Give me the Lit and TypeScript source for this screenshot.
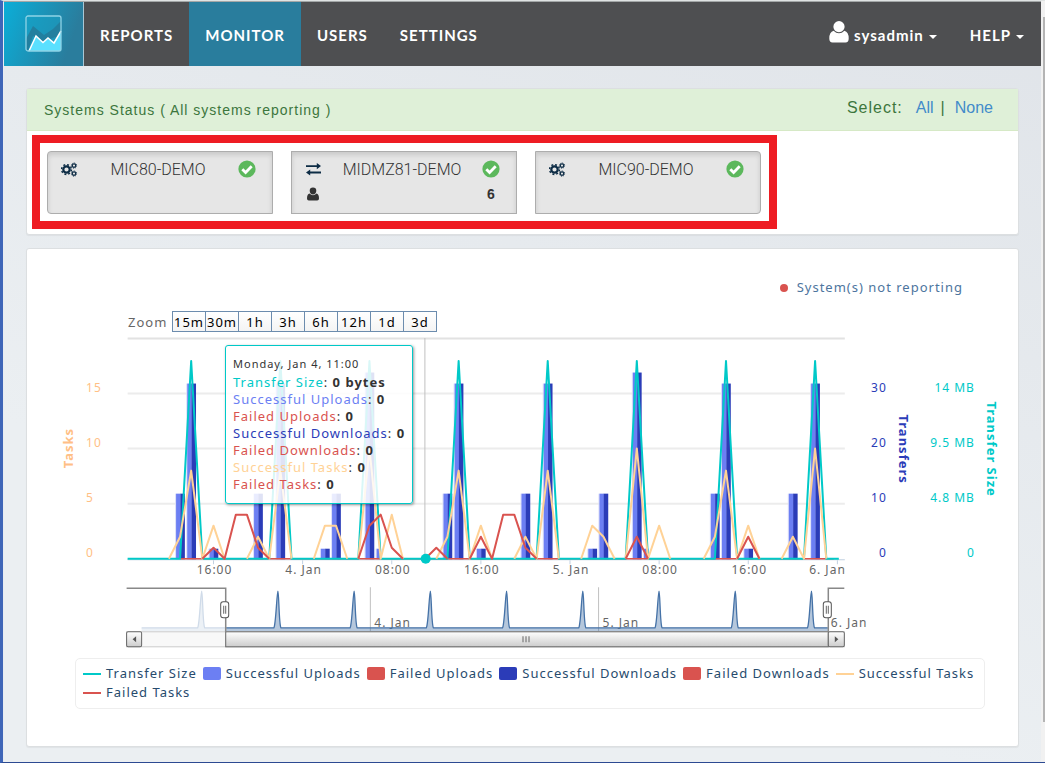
import { LitElement, html, svg, css } from "lit";
import { customElement, property, state } from "lit/decorators.js";

interface System {
  name: string;
  kind: "central" | "dmz";
  sessions?: number;
}

const SYSTEMS: System[] = [
  { name: "MIC80-DEMO", kind: "central" },
  { name: "MIDMZ81-DEMO", kind: "dmz", sessions: 6 },
  { name: "MIC90-DEMO", kind: "central" },
];

const RANGES = ["15m", "30m", "1h", "3h", "6h", "12h", "1d", "3d"];

const LEGEND = [
  { label: "Transfer Size", color: "#00c9c8", shape: "line" },
  { label: "Successful Uploads", color: "#6c7ff3", shape: "box" },
  { label: "Failed Uploads", color: "#d9534f", shape: "box" },
  { label: "Successful Downloads", color: "#2b3cb8", shape: "box" },
  { label: "Failed Downloads", color: "#d9534f", shape: "box" },
  { label: "Successful Tasks", color: "#ffd296", shape: "line" },
  { label: "Failed Tasks", color: "#d9534f", shape: "line" },
];

const READOUT = [
  { label: "Transfer Size", color: "#00c9c8", value: "0 bytes" },
  { label: "Successful Uploads", color: "#6c7ff3", value: "0" },
  { label: "Failed Uploads", color: "#d9534f", value: "0" },
  { label: "Successful Downloads", color: "#2b3cb8", value: "0" },
  { label: "Failed Downloads", color: "#d9534f", value: "0" },
  { label: "Successful Tasks", color: "#ffd296", value: "0" },
  { label: "Failed Tasks", color: "#d9534f", value: "0" },
];

/* Hours are counted from 16:00 on the first day. */
const HOUR = 11.13;
const ORIGIN = 186.3;
const BASE = 224.5;
const hx = (h: number) => ORIGIN + h * HOUR;
const taskY = (n: number) => BASE - n * 11;

const PEAKS = [-2, 6, 14, 22, 30, 38, 46, 54];

/* [hour, uploads, downloads] */
const TRANSFERS: [number, number, number][] = [
  [-3, 12, 12], [-2, 32, 32], [0, 2, 2], [4, 12, 12], [6, 32, 32], [10, 2, 2],
  [11, 12, 12], [14, 34, 34], [15, 2, 0], [21, 12, 12], [22, 32, 32], [24, 2, 2],
  [28, 12, 12], [30, 32, 32], [34, 2, 2], [35, 12, 12], [38, 34, 34], [39, 2, 0],
  [45, 12, 12], [46, 32, 32], [48, 2, 2], [52, 12, 12], [54, 32, 32],
];

const TASKS_OK: [number, number][][] = [
  [[-4, 0], [-3, 2], [-2, 8], [-1, 0], [0, 3], [1, 0]],
  [[3, 0], [4, 2], [5, 0], [6, 8], [7, 0]],
  [[9, 0], [10, 3], [11, 3], [12, 0]],
  [[13, 0], [14, 10], [15, 0], [16, 4], [17, 0]],
  [[20, 0], [21, 2], [22, 8], [23, 0], [24, 3], [25, 0]],
  [[27, 0], [28, 2], [29, 0], [30, 8], [31, 0]],
  [[33, 0], [34, 3], [35, 2], [36, 0]],
  [[37, 0], [38, 10], [39, 0], [40, 3], [41, 0]],
  [[44, 0], [45, 2], [46, 8], [47, 0], [48, 3], [49, 0]],
  [[51, 0], [52, 2], [53, 0], [54, 10], [55, 0]],
];

const TASKS_FAILED: [number, number][][] = [
  [[-1, 0], [0, 1], [1, 0], [2, 4], [3, 4], [4, 1], [5, 0]],
  [[13, 0], [14, 3], [15, 4], [16, 1], [17, 0]],
  [[19, 0], [20, 1], [21, 0]],
  [[23, 0], [24, 2], [25, 0], [26, 4], [27, 4], [28, 1], [29, 0]],
  [[37, 0], [38, 2], [39, 0]],
  [[47, 0], [48, 2], [49, 0]],
];

const TIMES: [number, string][] = [
  [0, "16:00"], [8, "4. Jan"], [16, "08:00"], [24, "16:00"],
  [32, "5. Jan"], [40, "08:00"], [48, "16:00"],
];

const path = (pts: [number, number][]) =>
  "M" + pts.map(([h, n]) => `${hx(h).toFixed(1)} ${taskY(n)}`).join("L");

const transferPath = () => {
  const parts = [`M100.5 ${BASE}`];
  for (const p of PEAKS) {
    parts.push(`L${hx(p - 1).toFixed(1)} ${BASE}L${hx(p).toFixed(1)} 27L${hx(p + 1).toFixed(1)} ${BASE}`);
  }
  return parts.join("") + `L811 ${BASE}`;
};

const overviewPath = () => {
  let d = "M115.5 293.5";
  for (let i = 0; i < 9; i++) {
    const x = 175.5 + i * 76.15;
    d += `H${x - 4}C${x - 2} 290 ${x - 1} 257 ${x} 257C${x + 1} 257 ${x + 1} 290 ${x + 3} 293.5`;
  }
  return d + "H801";
};

const ICONS = {
  gears: svg`<svg class="glyph" width="17" height="15" viewBox="0 0 17 15" aria-hidden="true">
    <g fill="none" stroke="#0d2c45">
      <circle cx="5.5" cy="7.5" r="3.2" stroke-width="2.2"/>
      <circle cx="5.5" cy="7.5" r="4.9" stroke-width="1.5" stroke-dasharray="1.92 1.93"/>
      <circle cx="13" cy="3.6" r="1.7" stroke-width="1.2"/>
      <circle cx="13" cy="3.6" r="2.6" stroke-width="1" stroke-dasharray="1.02 1.02"/>
      <circle cx="13" cy="11.6" r="1.7" stroke-width="1.2"/>
      <circle cx="13" cy="11.6" r="2.6" stroke-width="1" stroke-dasharray="1.02 1.02"/>
    </g></svg>`,
  swap: svg`<svg class="glyph" width="17" height="15" viewBox="0 0 17 15" aria-hidden="true">
    <path d="M1 3.2H11.8V1L16 4.1L11.8 7.2V5H1ZM16 9.6H5.2V7.6L1 10.6L5.2 13.6V11.4H16Z" fill="#0d2c45"/></svg>`,
  user: svg`<svg class="glyph" width="14" height="14" viewBox="0 0 14 14" aria-hidden="true">
    <path d="M7 .5a3.3 3.3 0 0 1 3.3 3.3C10.3 5.9 8.9 7.5 7 7.5S3.7 5.9 3.7 3.8A3.3 3.3 0 0 1 7 .5ZM3.6 6.6Q5 8.3 7 8.3T10.4 6.6Q13 7.2 13 11.6Q13 13.5 11.2 13.5H2.8Q1 13.5 1 11.6Q1 7.2 3.6 6.6Z" fill="#333"/></svg>`,
  check: svg`<svg width="18" height="18" viewBox="0 0 18 18" role="img" aria-label="Reporting">
    <circle cx="9" cy="9" r="8.6" fill="#5cb85c"/>
    <path d="M4.3 9.2L7.6 12.5L13.7 6.3" fill="none" stroke="#fff" stroke-width="2.8"/></svg>`,
  bust: svg`<svg width="20" height="22" viewBox="0 0 20 22" aria-hidden="true">
    <path d="M10 0a5.6 5.6 0 0 1 5.6 5.6C15.6 9 13 11.3 10 11.3S4.400 9 4.400 5.600A5.600 5.600 0 0 1 10 0ZM4.600 9.800Q7 12.300 10 12.300T15.400 9.800Q19.700 11 19.700 17.500Q19.700 21.500 16.500 21.500H3.500Q.3 21.500 .3 17.500Q.3 11 4.600 9.800Z" fill="#fff"/></svg>`,
};

@customElement("top-bar")
class TopBar extends LitElement {
  static styles = css`
    :host { display: block; }
    .bar {
      display: flex;
      align-items: stretch;
      height: 64px;
      background: #4e4f51;
      font: 700 15px Lato, "Open Sans", sans-serif;
      letter-spacing: 1px;
    }
    .logo {
      display: flex;
      align-items: center;
      justify-content: center;
      width: 79px;
      border-right: 1px solid #a9c8d6;
      background: linear-gradient(110deg, #0baed8, #2a7d9d 80%);
    }
    .links { display: flex; flex: 1; }
    .links a {
      display: flex;
      align-items: center;
      padding: 2px 16px 0;
      color: #fff;
      text-decoration: none;
    }
    .links a.active { background: #297d9d; }
    button {
      display: flex;
      align-items: center;
      gap: 5px;
      padding: 2px 17px 0 16px;
      border: 0;
      background: none;
      color: #fff;
      font: inherit;
      letter-spacing: inherit;
    }
    .bust { display: flex; margin-top: -6px; }
    .caret {
      margin-top: 3px;
      border: 4px solid transparent;
      border-top-color: #fff;
      border-bottom: 0;
    }
  `;

  render() {
    return html`
      <nav class="bar">
        <a class="logo" href="#" aria-label="Home">
          <svg width="38" height="38" viewBox="0 0 38 38" aria-hidden="true">
            <rect x="1" y="1" width="35" height="35" rx="2" fill="#18a0c4" fill-opacity=".5"/>
            <path d="M1 24L8 11L19 20L28 14L36 6V24L30 22L18 27L8 21L3 36H1Z" fill="#227f9f"/>
            <path d="M4 36L11 21L18 27.5L23 23L29 28L36 16V36Z" fill="#5ae0ff"/>
            <path d="M4 36L11 21L18 27.5L23 23L29 28L36 16" fill="none" stroke="#fff" stroke-width="1.5"/>
            <rect x="1" y="1" width="35" height="35" rx="2" fill="none" stroke="#8fd3e6" stroke-width="1.3"/>
          </svg>
        </a>
        <div class="links">
          <a href="#reports">REPORTS</a>
          <a class="active" href="#monitor" aria-current="page">MONITOR</a>
          <a href="#users">USERS</a>
          <a href="#settings">SETTINGS</a>
        </div>
        <button type="button"><span class="bust">${ICONS.bust}</span><span>sysadmin</span><span class="caret"></span></button>
        <button type="button"><span>HELP</span><span class="caret"></span></button>
      </nav>
    `;
  }
}

@customElement("system-status")
class SystemStatus extends LitElement {
  @property({ attribute: false }) systems: System[] = [];

  static styles = css`
    :host {
      display: block;
      border: 1px solid #dcdfe1;
      border-radius: 3px;
      background: #fff;
      box-shadow: 0 1px 1px rgba(0, 0, 0, 0.05);
      font-family: "Liberation Sans", Arial, sans-serif;
    }
    .head {
      display: flex;
      align-items: center;
      justify-content: space-between;
      height: 42px;
      padding: 0 25px 0 17px;
      border-bottom: 1px solid #d6e9c6;
      background: #dff0d8;
      color: #3c763d;
      box-sizing: border-box;
    }
    h2 { margin: 0; font-size: 14px; font-weight: 400; letter-spacing: 1px; }
    .select { display: flex; font-size: 16px; margin-top: -3px; }
    .caption { letter-spacing: 1px; margin-right: 13px; }
    .select a { color: #428bca; text-decoration: none; }
    .rule { margin: 0 10px 0 7px; }
    .group {
      display: inline-flex;
      flex-wrap: wrap;
      gap: 18px;
      margin: 4px 5px 5px;
      padding: 8px 8px 7px 7px;
      border: 8px solid #ee1c23;
      vertical-align: top;
    }
    .tile {
      display: grid;
      grid-template-columns: 20px 1fr 20px;
      grid-template-rows: 18px 20px;
      row-gap: 6px;
      align-items: center;
      justify-items: center;
      width: 226px;
      height: 63px;
      padding: 8px 15px 9px 11px;
      border: 1px solid #adadad;
      background: #e6e6e6;
      box-shadow: inset 0 3px 5px rgba(0, 0, 0, 0.125);
      box-sizing: border-box;
      color: #333;
      font: 300 16px Roboto, sans-serif;
    }
    .tile:first-child { border-radius: 4px 0 0 4px; }
    .tile:last-child { border-radius: 0 4px 4px 0; }
    .glyph { display: block; }
    .count { grid-column: 3; font: 700 14px "Liberation Sans", Arial, sans-serif; }
  `;

  render() {
    return html`
      <div class="head">
        <h2>Systems Status ( All systems reporting )</h2>
        <div class="select">
          <span class="caption">Select:</span>
          <a href="#all">All</a><span class="rule">|</span><a href="#none">None</a>
        </div>
      </div>
      <div class="group">
        ${this.systems.map(
          (s) => html`<button type="button" class="tile" aria-pressed="true">
            ${s.kind === "dmz" ? ICONS.swap : ICONS.gears}
            <span>${s.name}</span>
            ${ICONS.check}
            ${s.sessions ? html`${ICONS.user}<span class="count">${s.sessions}</span>` : ""}
          </button>`
        )}
      </div>
    `;
  }
}

@customElement("activity-chart")
class ActivityChart extends LitElement {
  @state() private range = "";

  static styles = css`
    :host {
      display: block;
      padding: 28px 0 37px;
      border: 1px solid #dcdfe1;
      border-radius: 3px;
      background: #fff;
      box-shadow: 0 1px 1px rgba(0, 0, 0, 0.05);
      font: 13px "Noto Sans", "Open Sans", sans-serif;
      letter-spacing: 1px;
    }
    .notice {
      display: flex;
      align-items: center;
      justify-content: flex-end;
      gap: 9px;
      height: 20px;
      padding-right: 55px;
      color: #4d759e;
    }
    .dot { width: 8px; height: 8px; margin-top: 2px; border-radius: 4px; background: #d9534f; }
    .ranges {
      display: flex;
      align-items: center;
      margin: 14px 0 0 101px;
      color: #666;
    }
    .ranges span { width: 44px; }
    .ranges button {
      width: 34px;
      height: 21px;
      margin-right: -1px;
      padding: 0;
      border: 1px solid #6c8cae;
      background: linear-gradient(#fff, #f4f4f4);
      color: #000;
      font: inherit;
      line-height: 18px;
      letter-spacing: 1px;
    }
    .stage { position: relative; margin-top: 2px; }
    .plot { display: block; width: 100%; }
    text { font-size: 12px; letter-spacing: 1px; }
    .time { fill: #666; text-anchor: middle; }
    .end { fill: #666; text-anchor: end; }
    .tasks { fill: #ffbf86; }
    .transfers { fill: #2b3cb8; text-anchor: end; }
    .size { fill: #00c9c8; text-anchor: end; }
    .title { font-size: 13px; font-weight: 700; text-anchor: middle; }
    .tip {
      position: absolute;
      left: 198px;
      top: 11px;
      width: 188px;
      height: 159px;
      padding: 8px 8px 8px 7px;
      border: 1px solid #00c9c8;
      border-radius: 3px;
      background: rgba(255, 255, 255, 0.85);
      box-shadow: 1px 1px 3px rgba(0, 0, 0, 0.4);
      box-sizing: border-box;
      color: #333;
      line-height: 17px;
      white-space: nowrap;
    }
    .when { font-size: 11px; line-height: 20px; }
    .legend {
      display: flex;
      flex-wrap: wrap;
      column-gap: 6px;
      margin: 8px 33px 0 48px;
      padding: 5px 4px 6px 7px;
      border: 1px solid #eee;
      border-radius: 5px;
    }
    .legend button {
      display: flex;
      align-items: center;
      gap: 5px;
      padding: 0;
      border: 0;
      background: none;
      color: #274b6d;
      font: inherit;
      line-height: 19px;
      letter-spacing: 1px;
      white-space: nowrap;
    }
    .legend svg { display: block; }
  `;

  private plot() {
    return html`<svg class="plot" viewBox="0 0 990 316" role="img" aria-label="Transfers and tasks over time">
      <defs>
        <linearGradient id="thumb" x1="0" y1="0" x2="0" y2="1">
          <stop offset="0" stop-color="#fff"/><stop offset="1" stop-color="#ccc"/>
        </linearGradient>
      </defs>
      ${[4.5, 59.5, 114.5, 169.5].map(
        (y, i) => svg`<path d="M100.5 ${y}H817" stroke=${i ? "#ececec" : "#e2e2e2"} stroke-width="2"/>`
      )}
      ${TRANSFERS.map(
        ([h, up, down]) => svg`
          <rect x=${hx(h) - 5} y=${BASE + 1 - up * 5.5} width="1" height=${up * 5.5} fill="#dcdff8"/>
          <rect x=${hx(h) - 4} y=${BASE + 1 - up * 5.5} width="4.5" height=${up * 5.5} fill="#6c7ff3"/>
          ${down ? svg`<rect x=${hx(h) + 0.3} y=${BASE + 1 - down * 5.5} width="4.5" height=${down * 5.5} fill="#2b3cb8"/>` : ""}`
      )}
      <path d="M100.5 ${BASE + 1}H817" stroke="#c0d0e0"/>
      <path d="M397.5 4V224" stroke="#c0c0c0"/>
      <path d="M153 ${BASE}H806" stroke="#d9534f" stroke-width="1.5"/>
      <g fill="none" stroke-width="2" stroke-linejoin="round">
        <path d=${transferPath()} stroke="#00c9c8"/>
        ${TASKS_OK.map((p) => svg`<path d=${path(p)} stroke="#ffd296"/>`)}
        ${TASKS_FAILED.map((p) => svg`<path d=${path(p)} stroke="#d9534f"/>`)}
      </g>
      <circle cx="398.3" cy="224.5" r="5" fill="#00c9c8"/>

      ${TIMES.map(
        ([h, label]) => svg`
          <path d="M${hx(h)} 226V230" stroke="#c0d0e0"/>
          <text class="time" x=${hx(h) + 1} y="240">${label}</text>`
      )}
      <path d="M${hx(56)} 226V230" stroke="#c0d0e0"/>
      <text class="end" x="818" y="240">6. Jan</text>
      ${["15", "10", "5", "0"].map((t, i) => svg`<text class="tasks" x="59" y=${58 + i * 55}>${t}</text>`)}
      ${["30", "20", "10", "0"].map((t, i) => svg`<text class="transfers" x="859" y=${58 + i * 55}>${t}</text>`)}
      ${["14 MB", "9.5 MB", "4.8 MB", "0"].map((t, i) => svg`<text class="size" x="947" y=${58 + i * 55}>${t}</text>`)}
      <text class="title" fill="#ffbf86" transform="translate(46 114) rotate(-90)">Tasks</text>
      <text class="title" fill="#2b3cb8" transform="translate(871 115) rotate(90)">Transfers</text>
      <text class="title" fill="#00c9c8" transform="translate(959 115) rotate(90)">Transfer Size</text>

      <g transform="translate(-1 0)">
        <path d="M344 253V297M572 253V297" stroke="#c0c0c0"/>
        <text fill="#666" x="348" y="293">4. Jan</text>
        <text fill="#666" x="576" y="293">5. Jan</text>
        <text fill="#666" x="804" y="293">6. Jan</text>
        <path d="${overviewPath()}V297H115.5Z" fill="#4572a7" fill-opacity=".4"/>
        <path d=${overviewPath()} fill="none" stroke="#4572a7" stroke-width="1.3"/>
        <rect x="101" y="254" width="99" height="43" fill="#fff" fill-opacity=".75"/>
        <rect x="100.5" y="297.5" width="717" height="15" fill="#f8f8f8" stroke="#ccc"/>
        <rect x="199.5" y="297.5" width="602" height="15" fill="url(#thumb)" stroke="#666"/>
        <rect x="100.5" y="297.5" width="15" height="15" rx="1.5" fill="url(#thumb)" stroke="#666"/>
        <rect x="801.5" y="297.5" width="16" height="15" rx="1.5" fill="url(#thumb)" stroke="#666"/>
        <path d="M110 302V308L106.5 305ZM808 302V308L811.5 305Z" fill="#555"/>
        <path d="M496.5 302V308M499.5 302V308M502.5 302V308" stroke="#666"/>
        <path d="M100.5 254H199.5V298M817.5 254H801.5V298" fill="none" stroke="#888" stroke-width="1.5"/>
        ${[194.5, 796.5].map(
          (x) => svg`<rect x=${x} y="267.5" width="8" height="16" rx="2.5" fill="#fff" stroke="#555"/>
            <path d="M${x + 3} 271.5V279.5M${x + 5} 271.5V279.5" stroke="#666"/>`
        )}
      </g>
    </svg>`;
  }

  render() {
    return html`
      <div class="notice"><span class="dot"></span><span>System(s) not reporting</span></div>
      <div class="ranges">
        <span>Zoom</span>
        ${RANGES.map(
          (r) => html`<button type="button" aria-pressed=${this.range === r} @click=${() => (this.range = r)}>${r}</button>`
        )}
      </div>
      <div class="stage">
        ${this.plot()}
        <div class="tip" role="status">
          <div class="when">Monday, Jan 4, 11:00</div>
          ${READOUT.map((r) => html`<div><span style="color:${r.color}">${r.label}</span>: <b>${r.value}</b></div>`)}
        </div>
      </div>
      <div class="legend">
        ${LEGEND.map(
          (l) => html`<button type="button">
            <svg width="18" height="14" viewBox="0 0 18 14" aria-hidden="true">
              ${l.shape === "line"
                ? svg`<path d="M0 7H18" stroke=${l.color} stroke-width="2"/>`
                : svg`<rect width="18" height="13" rx="2" fill=${l.color}/>`}
            </svg><span>${l.label}</span>
          </button>`
        )}
      </div>
    `;
  }
}

@customElement("app-root")
class AppRoot extends LitElement {
  static styles = css`
    :host { display: block; }
    .window {
      display: flex;
      min-height: 100vh;
      border-top: 1px solid #dfe3e3;
      border-left: 3px solid #3f66b8;
      border-bottom: 1px solid #2c4a92;
      box-sizing: border-box;
    }
    .page {
      flex: 1;
      min-width: 0;
      border-top: 1px solid #a3a7a7;
      border-left: 1px solid #e8ecf2;
      background: linear-gradient(200deg, #e0e4e9, #ebeff2 70%);
    }
    .content {
      display: flex;
      flex-direction: column;
      gap: 13px;
      padding: 22px 22px 15px;
    }
    .track {
      width: 4px;
      padding: 16px 0 40px 2px;
      background: #f1f1f1;
      box-sizing: border-box;
      display: flex;
    }
    .grip { flex: 1; background: #b4b4b4; }
  `;

  render() {
    return html`
      <div class="window">
        <div class="page">
          <top-bar></top-bar>
          <main class="content">
            <system-status .systems=${SYSTEMS}></system-status>
            <activity-chart></activity-chart>
          </main>
        </div>
        <div class="track"><div class="grip"></div></div>
      </div>
    `;
  }
}
